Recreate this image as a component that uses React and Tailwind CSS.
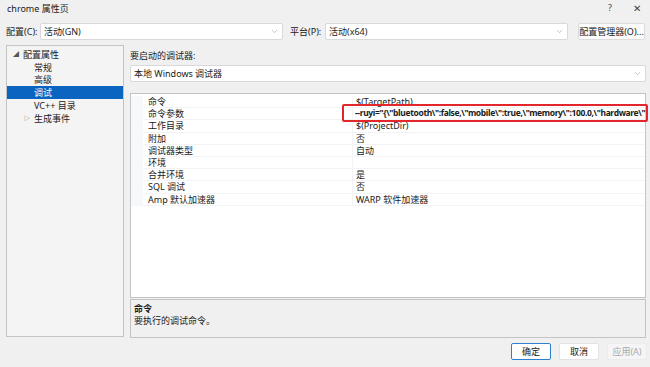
import { ChevronDown } from "lucide-react";

const TREE = [
  { label: "配置属性", depth: 0, caret: "open" },
  { label: "常规", depth: 1 },
  { label: "高级", depth: 1 },
  { label: "调试", depth: 1, selected: true },
  { label: "VC++ 目录", depth: 1 },
  { label: "生成事件", depth: 1, caret: "closed" },
];

const PROPS = [
  { name: "命令", value: "$(TargetPath)" },
  { name: "命令参数", value: "" },
  { name: "工作目录", value: "$(ProjectDir)" },
  { name: "附加", value: "否" },
  { name: "调试器类型", value: "自动" },
  { name: "环境", value: "" },
  { name: "合并环境", value: "是" },
  { name: "SQL 调试", value: "否" },
  { name: "Amp 默认加速器", value: "WARP 软件加速器" },
];

const ARGS = '--ruyi="{\\"bluetooth\\":false,\\"mobile\\":true,\\"memory\\":100.0,\\"hardware\\"';

function Combo({ text, className = "" }) {
  return (
    <div
      className={`h-[17px] bg-white border border-[#d9d9d9] rounded-[2px] flex items-center pl-[3px] pr-[3px] ${className}`}
    >
      <span className="flex-1 text-[9px] text-[#1a1a1a] leading-none">{text}</span>
      <ChevronDown className="w-[9px] h-[9px] text-[#9a9a9a]" strokeWidth={1.5} />
    </div>
  );
}

function Button({ children, primary, disabled, className = "" }) {
  return (
    <div
      className={`h-[17px] w-[40px] flex items-center justify-center text-[9px] rounded-[2px] border ${
        primary
          ? "bg-white border-[#2f7fd0] text-[#1a1a1a]"
          : disabled
          ? "bg-[#f5f5f5] border-[#ececec] text-[#a8a8a8]"
          : "bg-white border-[#e3e3e3] text-[#1a1a1a]"
      } ${className}`}
    >
      {children}
    </div>
  );
}

export default function App() {
  return (
    <div className="w-[650px] h-[367px] bg-[#f0f0f0] overflow-hidden flex flex-col font-['Noto_Sans','Noto_Sans_CJK_SC',sans-serif] text-[#1a1a1a]">
      {/* Title bar */}
      <div className="h-[16px] flex items-center pl-[7px] pr-[9px]">
        <span className="flex-1 text-[9px] leading-none pt-[1px]">chrome 属性页</span>
        <span className="text-[9px] text-[#444] mr-[21px]">?</span>
        <span className="text-[10px] text-[#444]">✕</span>
      </div>

      {/* Config row */}
      <div className="mt-[7px] h-[17px] flex items-center pl-[6px] pr-[5px]">
        <span className="w-[34px] text-[9px]">配置(C):</span>
        <Combo text="活动(GN)" className="w-[243px]" />
        <span className="ml-[7px] w-[35px] text-[9px]">平台(P):</span>
        <Combo text="活动(x64)" className="w-[243px]" />
        <div className="ml-[10px] h-[17px] flex-1 bg-[#fbfbfb] border border-[#dcdcdc] rounded-[2px] flex items-center justify-center text-[9px]">
          配置管理器(O)...
        </div>
      </div>

      {/* Main */}
      <div className="mt-[5px] flex pl-[6px] pr-[4px] h-[293px]">
        {/* Tree */}
        <div className="w-[118px] h-[292px] bg-[#f4f4f4] border border-[#c4c4c4] pt-[2px]">
          {TREE.map((t) => (
            <div
              key={t.label}
              className={`h-[12.8px] flex items-center text-[9px] leading-none ${
                t.selected ? "bg-[#0b64c0] text-white" : ""
              }`}
            >
              <span className={`${t.depth ? "w-[17px]" : "w-[6px]"} shrink-0`} />
              <span className="w-[10px] text-[6px] text-[#555] shrink-0">
                {t.caret === "open" ? "◢" : t.caret === "closed" ? "▷" : ""}
              </span>
              <span>{t.label}</span>
            </div>
          ))}
        </div>

        {/* Right column */}
        <div className="ml-[6px] flex-1 flex flex-col">
          <div className="h-[19px] pt-[2px] text-[9px] flex items-center">要启动的调试器:</div>
          <Combo text="本地 Windows 调试器" className="mt-[1px] h-[17px]" />

          {/* Property grid */}
          <div className="relative mt-[11px] h-[205px] bg-white border border-[#c4c4c4] pt-[2px]">
            {PROPS.map((p) => (
              <div key={p.name} className="h-[12.2px] flex text-[9px] leading-none">
                <div className="w-[12px] bg-[#f7f8fa]" />
                <div className="w-[209px] flex items-center pl-[5px] border-b border-[#f1f3f6]">{p.name}</div>
                <div className="flex-1 flex items-center pl-[3px] border-b border-[#f1f3f6] border-l border-l-[#f1f3f6] whitespace-nowrap overflow-hidden">
                  {p.value}
                </div>
              </div>
            ))}

            {/* Highlight over the edited argument */}
            <div className="absolute left-[211px] top-[10px] w-[306px] h-[18px] border-2 border-[#e3262c] rounded-[2px] flex items-center pl-[11px] overflow-hidden">
              <span className="text-[8.5px] font-bold whitespace-nowrap leading-none tracking-[-0.36px]">{ARGS}</span>
            </div>
          </div>

          {/* Description */}
          <div className="mt-[1px] h-[39px] border border-[#c4c4c4] bg-[#f0f0f0] px-[3px] pt-[3px] text-[9px] leading-[12px]">
            <div className="font-bold">命令</div>
            <div>要执行的调试命令。</div>
          </div>
        </div>
      </div>

      {/* Footer buttons */}
      <div className="mt-[5px] flex justify-end pr-[3px] gap-[8px]">
        <Button primary>确定</Button>
        <Button>取消</Button>
        <Button disabled>应用(A)</Button>
      </div>
    </div>
  );
}
